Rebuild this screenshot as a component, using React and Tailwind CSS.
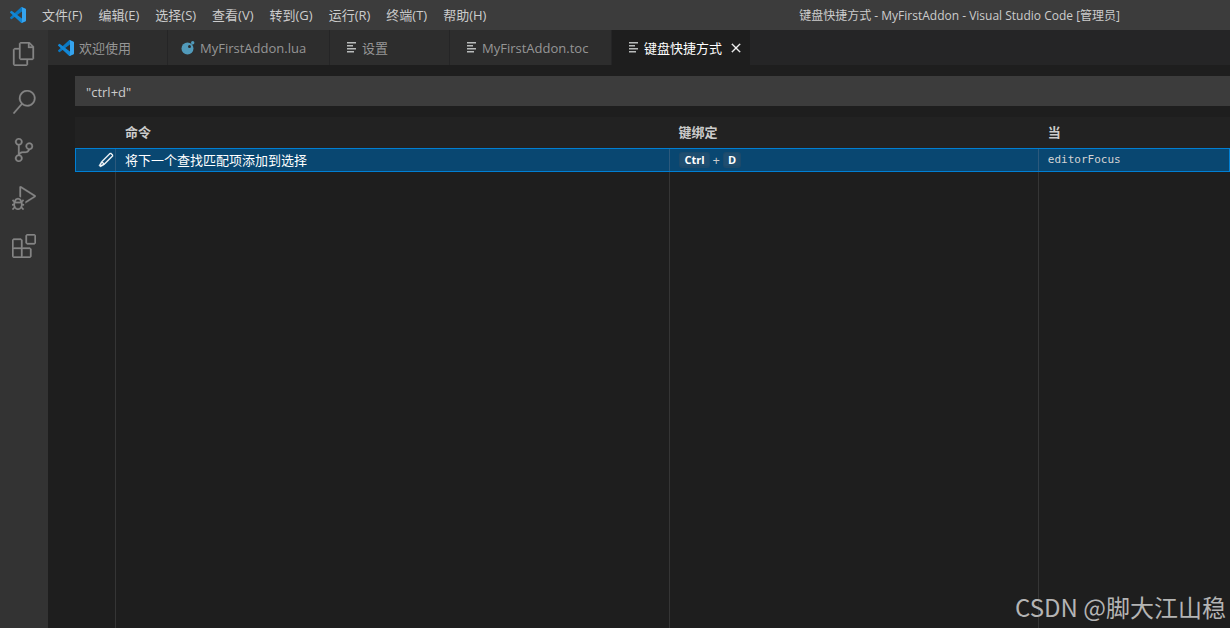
import React from "react";
import {
  VscFiles,
  VscSearch,
  VscSourceControl,
  VscDebugAlt,
  VscExtensions,
  VscEdit,
  VscClose,
} from "react-icons/vsc";

const menus = ["文件(F)", "编辑(E)", "选择(S)", "查看(V)", "转到(G)", "运行(R)", "终端(T)", "帮助(H)"];

const activities = [
  { label: "资源管理器", Icon: VscFiles },
  { label: "搜索", Icon: VscSearch },
  { label: "源代码管理", Icon: VscSourceControl },
  { label: "运行和调试", Icon: VscDebugAlt },
  { label: "扩展", Icon: VscExtensions },
];

function CodeLogo() {
  return (
    <svg viewBox="0 0 100 100" className="size-4 shrink-0" aria-hidden="true">
      <path fill="#0a78c2" d="M96.500 10.800 75.900.9a6.200 6.200 0 0 0-7.100 1.200L1.300 63.600a4.200 4.200 0 0 0 0 6.200l5.500 5a4.200 4.200 0 0 0 5.300.200L93.400 13.400A4.100 4.100 0 0 1 100 16.600v-.200a6.200 6.200 0 0 0-3.500-5.600z" />
      <path fill="#1287d6" d="m96.500 89.200-20.600 9.900a6.200 6.200 0 0 1-7.100-1.200L1.300 36.400a4.200 4.200 0 0 1 0-6.200l5.500-5a4.200 4.200 0 0 1 5.300-.200l81.300 61.600a4.100 4.100 0 0 0 6.600-3.200v.200a6.200 6.200 0 0 1-3.500 5.600z" />
      <path fill="#35a3ee" d="M75.900 99.100a6.200 6.200 0 0 1-7.100-1.200c2.300 2.300 6.200.7 6.200-2.600V4.700c0-3.300-3.900-4.900-6.200-2.600A6.200 6.200 0 0 1 75.900.9l20.600 9.900A6.200 6.200 0 0 1 100 16.400v67.200a6.200 6.200 0 0 1-3.500 5.600z" />
    </svg>
  );
}

function LuaIcon() {
  return (
    <svg viewBox="0 0 16 16" className="size-4 shrink-0" aria-hidden="true">
      <circle cx="7.500" cy="8.500" r="6" fill="#519aba" />
      <circle cx="9.500" cy="6.500" r="1.500" fill="#2d2d2d" />
      <circle cx="12.700" cy="2.800" r="1.700" fill="#519aba" />
    </svg>
  );
}

function LinesIcon() {
  return (
    <svg viewBox="0 0 10 11" className="mr-[5px] h-[11px] w-[10px] shrink-0" aria-hidden="true">
      <path fill="#b9bcbc" d="M0 0h9v1.500H0zM0 3h6v1.500H0zM0 6h9v1.500H0zM0 9h7v1.500H0z" />
    </svg>
  );
}

const tabs = [
  { title: "欢迎使用", width: "w-[120px]", icon: <CodeLogo />, pad: "pl-[10px] gap-[5px]" },
  { title: "MyFirstAddon.lua", width: "w-[162px]", icon: <LuaIcon />, pad: "pl-3 gap-1" },
  { title: "设置", width: "w-[120px]", icon: <LinesIcon />, pad: "pl-[17px]" },
  { title: "MyFirstAddon.toc", width: "w-[162px]", icon: <LinesIcon />, pad: "pl-[17px]" },
];

function Key({ children }) {
  return (
    <kbd className="rounded-[3px] border border-b-2 border-[#1c4a6b] bg-[#1f4e70] px-1 text-[11px] leading-[13px] font-bold text-white [font-family:'Open_Sans','Noto_Sans_CJK_SC',sans-serif]">
      {children}
    </kbd>
  );
}

export default function App() {
  return (
    <div className="relative flex h-screen flex-col overflow-hidden bg-[#1e1e1e] text-[13px] text-[#cccccc] [font-family:'Open_Sans','Noto_Sans_CJK_SC',sans-serif]">
      <header className="flex h-[30px] shrink-0 items-center bg-[#3c3c3c] pl-[10px]">
        <CodeLogo />
        <nav className="ml-2 flex" aria-label="菜单">
          {menus.map((m) => (
            <button key={m} type="button" className="px-2 leading-[30px] whitespace-nowrap">
              {m}
            </button>
          ))}
        </nav>
        <h1 className="mr-[110px] ml-auto pt-0.5 text-[12px] whitespace-nowrap">
          键盘快捷方式 - MyFirstAddon - Visual Studio Code [管理员]
        </h1>
      </header>

      <div className="flex min-h-0 flex-1">
        <aside className="flex w-12 shrink-0 flex-col bg-[#333333]">
          {activities.map(({ label, Icon }) => (
            <button
              key={label}
              type="button"
              aria-label={label}
              className="flex h-12 items-center justify-center text-[#858585]"
            >
              <Icon className="size-6 stroke-[0.3]" />
            </button>
          ))}
        </aside>

        <main className="flex min-w-0 flex-1 flex-col">
          <div role="tablist" className="flex h-[35px] shrink-0 bg-[#252526]">
            {tabs.map((t) => (
              <button
                key={t.title}
                type="button"
                role="tab"
                aria-selected="false"
                className={`${t.width} ${t.pad} flex items-center border-r border-[#252526] bg-[#2d2d2d] whitespace-nowrap text-[#969696]`}
              >
                {t.icon}
                <span className="pt-0.5">{t.title}</span>
              </button>
            ))}
            <div className="flex w-[138px] items-center bg-[#1e1e1e] text-white">
              <button
                type="button"
                role="tab"
                aria-selected="true"
                className="flex items-center pl-[17px] whitespace-nowrap"
              >
                <LinesIcon />
                <span className="pt-0.5">键盘快捷方式</span>
              </button>
              <button type="button" aria-label="关闭" className="ml-[6px]">
                <VscClose className="size-4 stroke-[0.4]" />
              </button>
            </div>
          </div>

          <div className="flex min-h-0 flex-1 flex-col pt-[11px] pl-[27px]">
            <input
              type="text"
              aria-label="搜索键绑定"
              defaultValue={'"ctrl+d"'}
              className="mb-[11px] h-[30px] w-full shrink-0 bg-[#3c3c3c] px-[11px] pt-0.5 outline-none"
            />
            <div className="min-h-0 flex-1">
              <table className="h-full w-full table-fixed border-separate border-spacing-0 text-left">
                <colgroup>
                  <col className="w-[41px]" />
                  <col className="w-[48%]" />
                  <col className="w-[31.9%]" />
                  <col />
                </colgroup>
                <thead>
                  <tr className="h-[31px] bg-[#222222]">
                    <th className="p-0" aria-label="操作" />
                    <th className="p-0 pl-[9px] font-bold">命令</th>
                    <th className="p-0 pl-2 font-bold">键绑定</th>
                    <th className="p-0 pl-[9px] font-bold">当</th>
                  </tr>
                </thead>
                <tbody>
                  <tr className="h-6 bg-[#094771] text-white outline-1 -outline-offset-1 outline-[#007fd4]">
                    <td className="border-r border-[#2c597c] p-0">
                      <button type="button" aria-label="更改键绑定" className="ml-[23px] block">
                        <VscEdit className="size-4 stroke-[0.4]" />
                      </button>
                    </td>
                    <td className="border-r border-[#2c597c] p-0 pl-[9px] leading-5">将下一个查找匹配项添加到选择</td>
                    <td className="border-r border-[#2c597c] p-0 pl-[9px]">
                      <div className="flex items-center gap-[3px] leading-4 text-[#cccccc]">
                        <Key>Ctrl</Key>
                        <span>+</span>
                        <Key>D</Key>
                      </div>
                    </td>
                    <td className="p-0 pl-[9px] text-[11px] leading-5 text-[#d4d4d4] [font-family:'DejaVu_Sans_Mono',monospace]">
                      editorFocus
                    </td>
                  </tr>
                  <tr aria-hidden="true">
                    <td className="border-r border-[#353535] p-0" />
                    <td className="border-r border-[#353535] p-0" />
                    <td className="border-r border-[#353535] p-0" />
                    <td className="p-0" />
                  </tr>
                </tbody>
              </table>
            </div>
          </div>
        </main>
      </div>

      <p className="absolute right-1 bottom-[5px] text-[24px] leading-8 whitespace-nowrap text-[#b4b4b4] [font-family:'Noto_Sans_CJK_SC',sans-serif]">
        CSDN @脚大江山稳
      </p>
    </div>
  );
}
